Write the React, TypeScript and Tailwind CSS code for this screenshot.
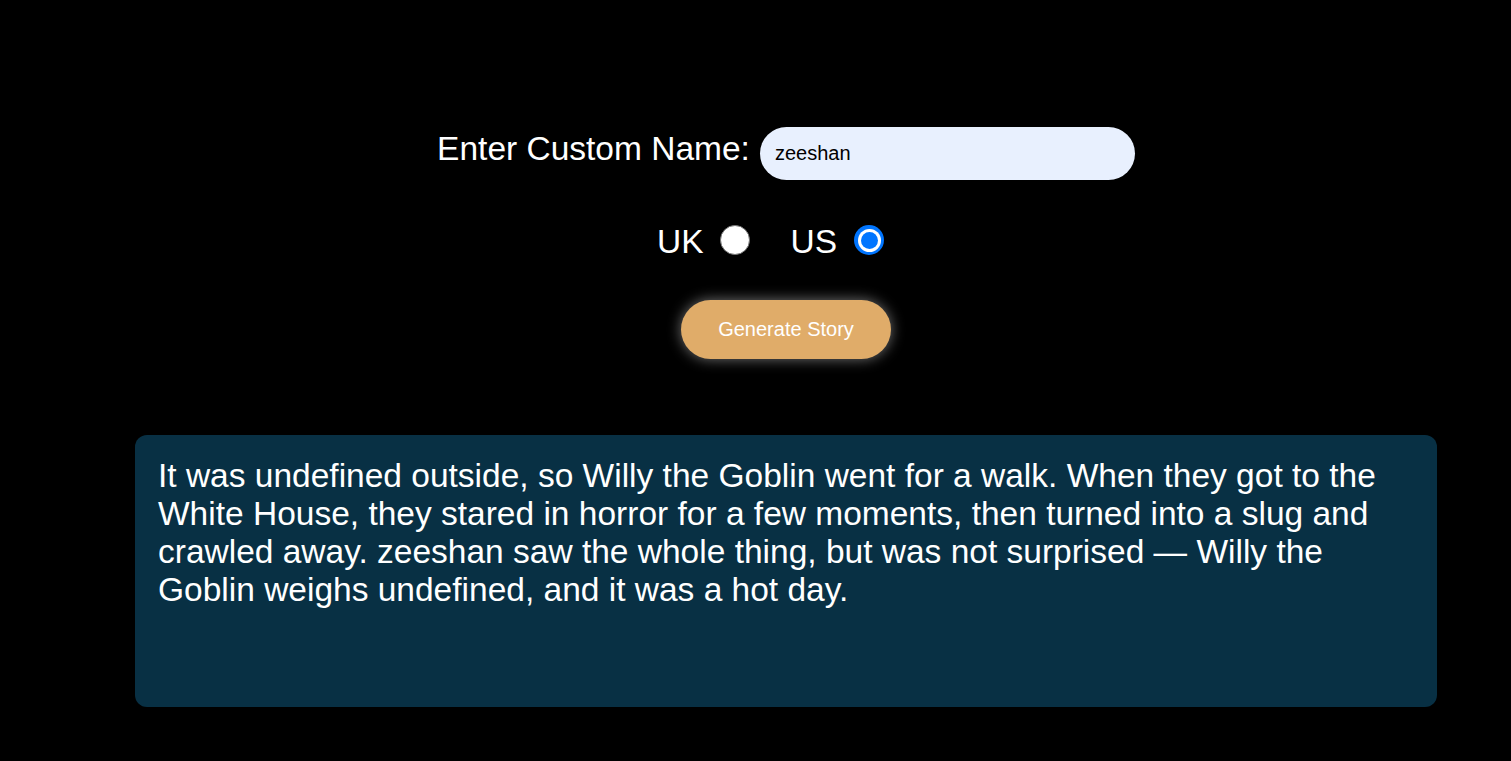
import React from "react";

export default function App() {
  const font = { fontFamily: '"Liberation Sans", Arial, sans-serif' };
  return (
    <div className="min-h-[761px] w-full bg-black text-white" style={font}>
      <div className="ml-[135px] w-[1302px] pt-[127px] flex flex-col items-center">
        <div className="flex items-baseline gap-[10px] h-[53px]">
          <label className="text-[33.5px] leading-[38px] text-white">Enter Custom Name:</label>
          <input
            defaultValue="zeeshan"
            className="w-[375px] h-[53px] rounded-full bg-[#e8f0fe] text-black text-[20px] px-[15px] outline-none"
            style={font}
          />
        </div>
        <div className="mt-[43px] ml-[-31px] flex items-center h-[38px]">
          <span className="text-[33.5px] leading-[38px]">UK</span>
          <span className="ml-[16px] w-[30px] h-[30px] rounded-full bg-white border border-[#767676] mt-[-4px]" />
          <span className="ml-[41px] text-[33.5px] leading-[38px]">US</span>
          <span className="ml-[17px] w-[30px] h-[30px] rounded-full bg-[#0075ff] flex items-center justify-center mt-[-4px]">
            <span className="w-[23px] h-[23px] rounded-full bg-white flex items-center justify-center">
              <span className="w-[17px] h-[17px] rounded-full bg-[#0075ff]" />
            </span>
          </span>
        </div>
        <button className="mt-[39px] w-[210px] h-[59px] rounded-full bg-[#e0ac69] text-white text-[20px] pb-[2px] shadow-[0_0_14px_rgba(255,255,255,0.45)]" style={font}>
          Generate Story
        </button>
      </div>
      <div className="ml-[135px] mt-[76px] w-[1302px] min-h-[272px] rounded-[12px] bg-[#083044] px-[23px] pt-[22px] pb-[20px]">
        <p className="text-[33.5px] leading-[38px] text-white">
          It was undefined outside, so Willy the Goblin went for a walk. When they got to the White House, they stared in horror for a few moments, then turned into a slug and crawled away. zeeshan saw the whole thing, but was not surprised — Willy the Goblin weighs undefined, and it was a hot day.
        </p>
      </div>
    </div>
  );
}
